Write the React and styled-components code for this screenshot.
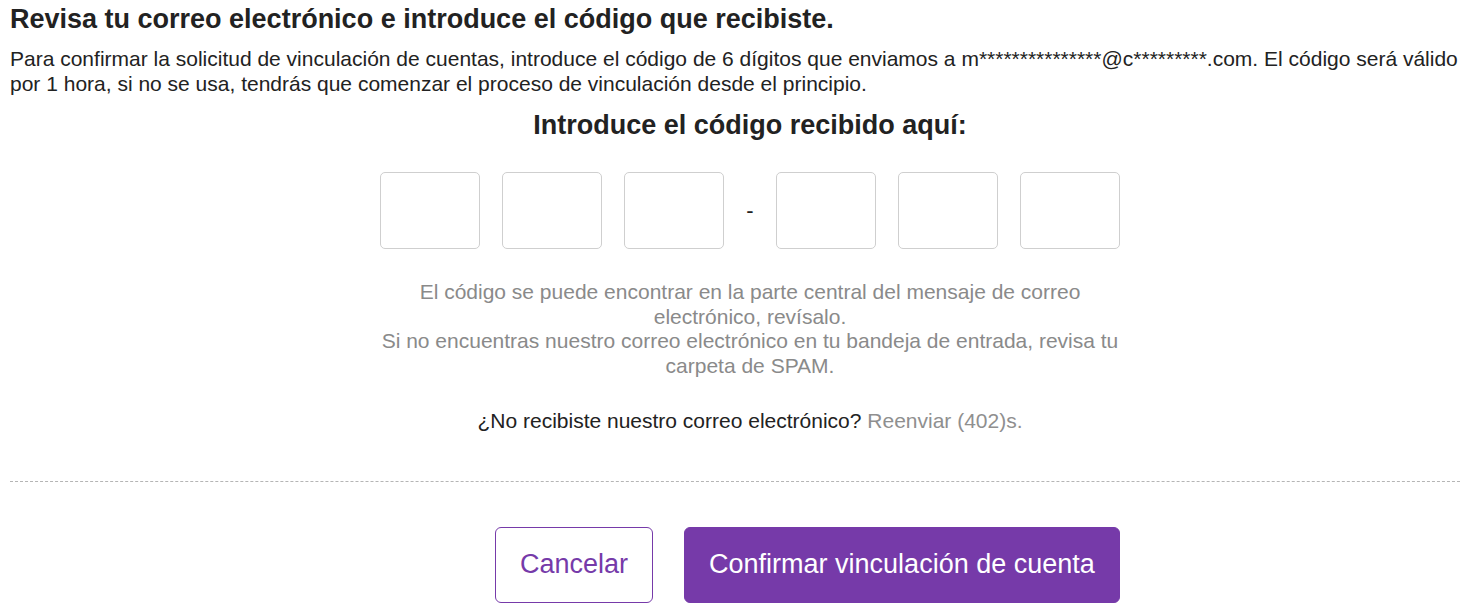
import React from 'react';
import styled, { createGlobalStyle } from 'styled-components';

const GlobalStyle = createGlobalStyle`
  body {
    margin: 0;
    background: #fff;
    font-family: 'Liberation Sans', Arial, sans-serif;
    color: #222;
  }
`;

const digits = [0, 1, 2, 3, 4, 5];

export default function App() {
  return (
    <>
      <GlobalStyle />
      <Page>
        <Title>Revisa tu correo electrónico e introduce el código que recibiste.</Title>
        <Intro>
          Para confirmar la solicitud de vinculación de cuentas, introduce el código de 6 dígitos que enviamos a
          m***************@c*********.com. El código será válido por 1 hora, si no se usa, tendrás que comenzar el
          proceso de vinculación desde el principio.
        </Intro>
        <CodeSection>
          <Subtitle>Introduce el código recibido aquí:</Subtitle>
          <CodeRow>
            {digits.map((d) => (
              <React.Fragment key={d}>
                {d === 3 && <Dash>-</Dash>}
                <DigitInput maxLength={1} inputMode="numeric" aria-label={`Dígito ${d + 1}`} />
              </React.Fragment>
            ))}
          </CodeRow>
          <Hint>
            El código se puede encontrar en la parte central del mensaje de correo electrónico, revísalo.
            <br />
            Si no encuentras nuestro correo electrónico en tu bandeja de entrada, revisa tu carpeta de SPAM.
          </Hint>
          <Resend>
            ¿No recibiste nuestro correo electrónico? <Muted>Reenviar (402)s.</Muted>
          </Resend>
        </CodeSection>
        <Divider />
        <Actions>
          <Button $variant="outline">Cancelar</Button>
          <Button>Confirmar vinculación de cuenta</Button>
        </Actions>
      </Page>
    </>
  );
}

const Page = styled.div`
  width: 1500px;
  padding: 4px 0 0 10px;
  box-sizing: border-box;
`;

const Title = styled.h1`
  margin: 0;
  font-size: 27px;
  line-height: 30px;
  font-weight: 700;
  color: #222;
`;

const Intro = styled.p`
  margin: 12px 0 0;
  width: 1452px;
  font-size: 21px;
  line-height: 25px;
  color: #222;
`;

const CodeSection = styled.div`
  width: 1480px;
  display: flex;
  flex-direction: column;
  align-items: center;
`;

const Subtitle = styled.h2`
  margin: 14px 0 0;
  font-size: 27px;
  line-height: 30px;
  font-weight: 700;
  color: #222;
`;

const CodeRow = styled.div`
  margin-top: 32px;
  display: flex;
  align-items: center;
  gap: 22px;
`;

const DigitInput = styled.input`
  width: 100px;
  height: 77px;
  box-sizing: border-box;
  border: 1px solid #cfcfcf;
  border-radius: 5px;
  font-family: inherit;
  font-size: 30px;
  text-align: center;
  outline: none;
  background: #fff;
`;

const Dash = styled.span`
  width: 8px;
  text-align: center;
  font-size: 22px;
  color: #222;
`;

const Hint = styled.p`
  margin: 31px 0 0;
  width: 740px;
  text-align: center;
  font-size: 21px;
  line-height: 24.7px;
  color: #8a8a8a;
`;

const Resend = styled.p`
  margin: 29px 0 0;
  font-size: 21px;
  line-height: 25px;
  color: #222;
`;

const Muted = styled.span`
  color: #8f8f8f;
`;

const Divider = styled.hr`
  margin: 48px 0 0;
  border: 0;
  border-top: 1px dashed #b5b5b5;
  width: 1460px;
`;

const Actions = styled.div`
  margin-top: 45px;
  padding-left: 485px;
  display: flex;
  gap: 31px;
`;

const Button = styled.button`
  height: 76px;
  padding: 0 24px;
  box-sizing: border-box;
  border-radius: 6px;
  font-family: inherit;
  font-size: 27px;
  cursor: pointer;
  border: 1px solid #763aa9;
  background: ${(p) => (p.$variant === 'outline' ? '#fff' : '#763aa9')};
  color: ${(p) => (p.$variant === 'outline' ? '#763aa9' : '#fff')};
`;
